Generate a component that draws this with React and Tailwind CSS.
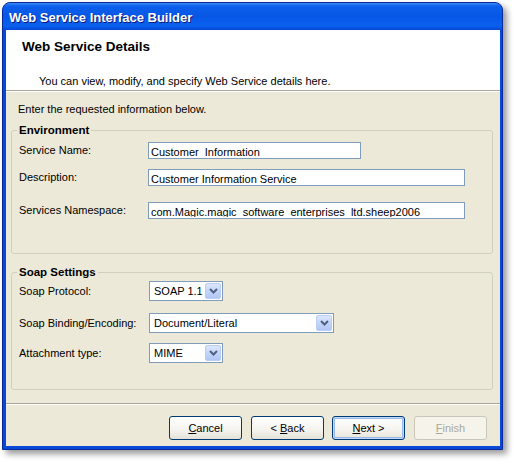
import React from "react";

function Chevron() {
  return (
    <svg width="9" height="6" viewBox="0 0 9 6" className="block">
      <polyline points="1,1 4.5,4.5 8,1" fill="none" stroke="#4D6185" strokeWidth="2" />
    </svg>
  );
}

function Combo({ width, value }) {
  return (
    <div className={`${width} h-[20px] ml-px flex items-center border border-[#7F9DB9] bg-white`}>
      <div className="flex-1 pl-[4px] whitespace-nowrap overflow-hidden">{value}</div>
      <div className="w-[16px] h-[16px] mr-px flex items-center justify-center rounded-[2px] border border-[#BACDF5] bg-[linear-gradient(to_bottom,#DCE7FC_0%,#C3D4F8_50%,#B2C7F4_100%)]">
        <Chevron />
      </div>
    </div>
  );
}

function TextBox({ width, value }) {
  return (
    <div className={`${width} h-[17px] border border-[#7F9DB9] bg-white pl-[2px] pt-[3px]`}>
      <div className="h-[11px] overflow-hidden whitespace-pre">{value}</div>
    </div>
  );
}

function Row({ label, children, className }) {
  return (
    <div className={`flex items-center ${className}`}>
      <div className="w-[129px] shrink-0">{label}</div>
      {children}
    </div>
  );
}

function Group({ title, className, children }) {
  return (
    <div className={`relative ml-[5px] mr-[7px] border border-[#D0D0BF] rounded-[3px] pl-[7px] ${className}`}>
      <div className="absolute left-[5px] top-[-7px] px-[2px] bg-[#ECE9D8] font-bold text-[11.5px] leading-[13px]">
        {title}
      </div>
      {children}
    </div>
  );
}

function Button({ children, variant }) {
  const base = "w-[73px] h-[24px] rounded-[3px] flex items-center justify-center text-[11px] leading-[13px] whitespace-pre";
  if (variant === "default") {
    return (
      <div className={`${base} border border-[#003C74] bg-[linear-gradient(to_bottom,#FFFFFF_0%,#F4F3EE_60%,#E6E4DA_100%)] shadow-[inset_0_0_0_1px_#C3D8F8,inset_0_0_0_2px_#9AB8EC]`}>
        {children}
      </div>
    );
  }
  if (variant === "disabled") {
    return (
      <div className={`${base} border border-[#C9C7BA] bg-[#F5F4EA] text-[#ACA899]`}>
        {children}
      </div>
    );
  }
  return (
    <div className={`${base} border border-[#003C74] bg-[linear-gradient(to_bottom,#FFFFFF_0%,#F4F3EE_60%,#E3E1D7_100%)]`}>
      {children}
    </div>
  );
}

export default function App() {
  return (
    <div className="w-[517px] h-[464px] bg-white font-['Liberation_Sans',Arial,sans-serif] text-[11px] leading-[13px] text-black pt-[2px] pl-[2px]">
      <div className="w-[501px] h-[448px] flex flex-col border border-[#0A2A9A] rounded-t-[8px] bg-[#0848D6] shadow-[4px_4px_6px_rgba(0,0,0,0.4)]">
        <div className="h-[27px] shrink-0 rounded-t-[7px] bg-[linear-gradient(to_bottom,#3A8AF6_0%,#0C5FEA_12%,#0757E6_50%,#0B60EE_85%,#0647D6_100%)] pl-[6px] pt-[7px] text-white font-bold text-[13px] leading-[16px] [text-shadow:1px_1px_0_#0A1A7A]">
          Web Service Interface Builder
        </div>
        <div className="ml-[3px] mr-[2px] h-[416px] flex flex-col bg-[#ECE9D8]">
          <div className="h-[61px] shrink-0 bg-white border-b border-[#ACA899] pt-[9px]">
            <div className="pl-[16px] font-bold text-[13.5px] leading-[16px]">Web Service Details</div>
            <div className="mt-[20px] pl-[33px]">You can view, modify, and specify Web Service details here.</div>
          </div>
          <div className="flex-1 flex flex-col border-t border-white pt-[11px]">
            <div className="pl-[12px]">Enter the requested information below.</div>

            <Group title="Environment" className="mt-[14px] pt-[11px] pb-[34px]">
              <Row label="Service Name:">
                <TextBox width="w-[213px]" value="Customer_Information" />
              </Row>
              <Row label="Description:" className="mt-[10px]">
                <TextBox width="w-[317px]" value="Customer Information Service" />
              </Row>
              <Row label="Services Namespace:" className="mt-[16px]">
                <TextBox width="w-[317px]" value="com.Magic.magic_software_enterprises_ltd.sheep2006" />
              </Row>
            </Group>

            <Group title="Soap Settings" className="mt-[18px] pt-[8px] pb-[26px]">
              <Row label="Soap Protocol:">
                <Combo width="w-[74px]" value="SOAP 1.1" />
              </Row>
              <Row label="Soap Binding/Encoding:" className="mt-[12px]">
                <Combo width="w-[185px]" value="Document/Literal" />
              </Row>
              <Row label="Attachment type:" className="mt-[10px]">
                <Combo width="w-[74px]" value="MIME" />
              </Row>
            </Group>

            <div className="mt-[13px] border-t border-[#ACA899] border-b border-b-white" />

            <div className="pt-[11px] pr-[13px] flex justify-end">
              <Button>
                <span className="underline">C</span>ancel
              </Button>
              <div className="ml-[9px]">
                <Button>
                  {"< "}<span className="underline">B</span>ack
                </Button>
              </div>
              <div className="ml-[8px]">
                <Button variant="default">
                  <span className="underline">N</span>{"ext >"}
                </Button>
              </div>
              <div className="ml-[9px]">
                <Button variant="disabled">
                  <span className="underline">F</span>inish
                </Button>
              </div>
            </div>
          </div>
        </div>
      </div>
    </div>
  );
}
